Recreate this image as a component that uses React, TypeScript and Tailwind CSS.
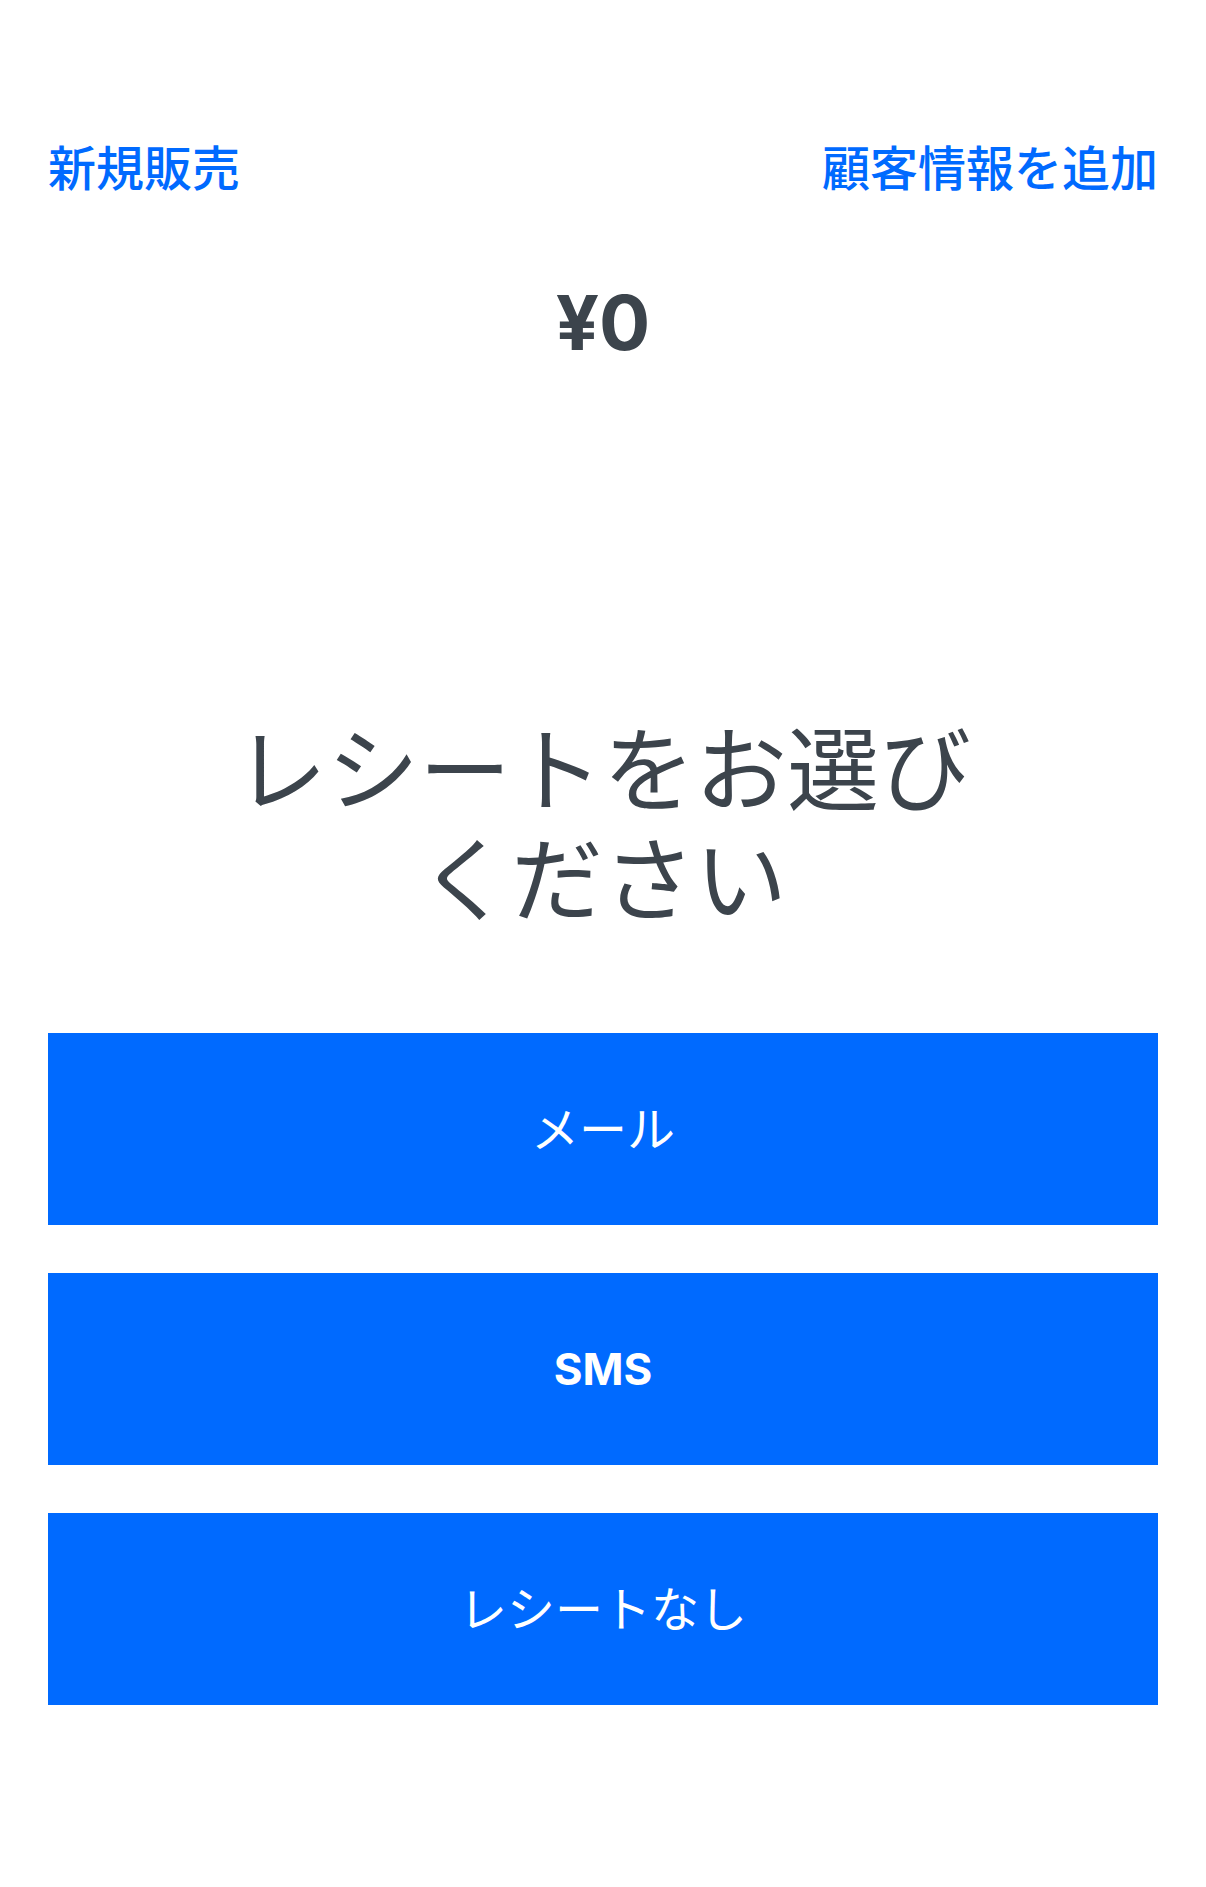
export default function App() {
  const options = [
    { id: 'email', label: 'メール', bold: false },
    { id: 'sms', label: 'SMS', bold: true },
    { id: 'none', label: 'レシートなし', bold: false },
  ];

  return (
    <div
      className="min-h-screen bg-white px-[48px] pt-[137px] pb-[120px]"
      style={{ fontFamily: '"Noto Sans CJK JP", "Noto Sans", sans-serif' }}
    >
      <div className="flex items-center justify-between text-[48px] leading-[56px] font-medium text-[#006aff]">
        <button>新規販売</button>
        <button>顧客情報を追加</button>
      </div>

      <div className="mt-[81px] text-center text-[76px] leading-[96px] font-bold text-[#3c444c] font-['Inter',sans-serif]">
        ¥0
      </div>

      <h1 className="mx-auto mt-[339px] max-w-[800px] text-center text-[92px] leading-[110px] font-normal text-[#3c444c]">
        レシートをお選びください
      </h1>

      <div className="mt-[104px] flex flex-col gap-[48px]">
        {options.map((o) => (
          <button
            key={o.id}
            className={`h-[192px] w-full bg-[#006aff] text-white ${
              o.bold ? "text-[44px] font-bold font-['Inter',sans-serif]" : 'text-[48px] font-normal pb-[6px]'
            }`}
          >
            {o.label}
          </button>
        ))}
      </div>
    </div>
  );
}
